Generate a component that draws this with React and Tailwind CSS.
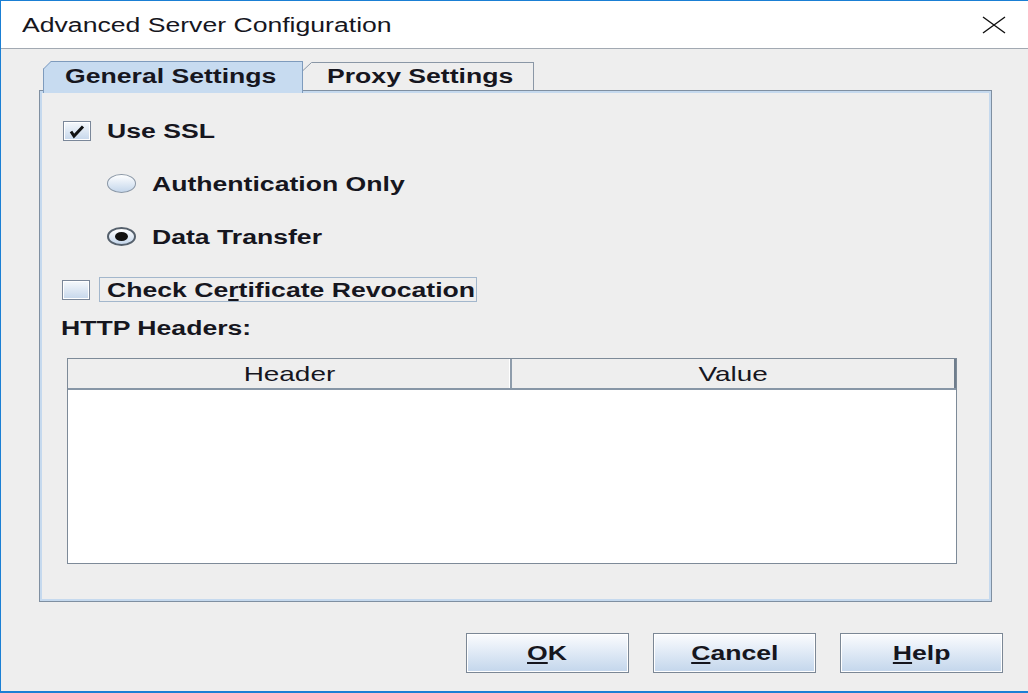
import React from 'react';

// horizontally stretched text, the screenshot is wider than it is tall
const S = ({ children, center, className = '' }) => (
  <span
    className={`inline-block whitespace-nowrap scale-x-[1.33] ${
      center ? 'origin-center' : 'origin-left'
    } ${className}`}
  >
    {children}
  </span>
);

const CheckBox = ({ checked }) => (
  <div className="w-[28px] h-[20px] shrink-0 border border-[#7a8799] bg-linear-to-b from-[#f6f9fc] to-[#c6d7eb] shadow-[inset_0_0_0_1px_#ffffff] flex items-center justify-center">
    {checked && (
      <svg width="20" height="16" viewBox="0 0 20 16">
        <path d="M4 8.5 L7 13 L16 3.5" stroke="#111" strokeWidth="3" fill="none" />
      </svg>
    )}
  </div>
);

const Radio = ({ checked }) => (
  <div
    className={`w-[29px] h-[19px] shrink-0 rounded-[50%] border bg-linear-to-b from-[#ffffff] to-[#c4d6eb] flex items-center justify-center ${
      checked ? 'border-[#55606c] border-2' : 'border-[#8a97a6]'
    }`}
  >
    {checked && <div className="w-[13px] h-[9px] rounded-[50%] bg-[#111]" />}
  </div>
);

const Button = ({ mnemonic, rest }) => (
  <button className="w-[163px] h-[40px] border border-[#7b8795] bg-linear-to-b from-[#fbfcfe] to-[#c3d6ec] shadow-[inset_0_0_0_1px_#ffffff] font-bold text-[20px] flex items-center justify-center">
    <S center>
      <u className="underline-offset-2">{mnemonic}</u>
      {rest}
    </S>
  </button>
);

export default function App() {
  return (
    <div className="w-[1028px] h-[693px] flex flex-col border-t border-l border-b-2 border-[#1a7fd4] bg-[#eeeeee] text-[#16161e] font-['Liberation_Sans',Arial,sans-serif]">
      {/* Title bar */}
      <div className="h-[48px] shrink-0 bg-white border-b border-[#a2a9b2] flex items-center justify-between pl-[21px] pr-[22px]">
        <span className="text-[20px] leading-none">
          <S>Advanced Server Configuration</S>
        </span>
        <svg width="24" height="18" viewBox="0 0 24 18">
          <path d="M1 1 L23 17 M23 1 L1 17" stroke="#111" strokeWidth="1.4" fill="none" />
        </svg>
      </div>

      {/* Body */}
      <div className="flex-1 flex flex-col pl-[38px] pt-[12px]">
        {/* Tabs */}
        <div className="flex items-end h-[29px] ml-[4px] text-[20px] font-bold">
          <div className="relative z-10 w-[260px] h-[32px] -mb-[3px] border border-b-0 border-[#7e9bbd] bg-[#c7dbf0] pl-[21px] pb-[4px] flex items-center">
            <svg className="absolute -left-px -top-px" width="8" height="8" viewBox="0 0 8 8">
              <path d="M0 0 H8 L0 8 Z" fill="#eeeeee" />
              <path d="M0.5 8 L8 0.5" stroke="#7e9bbd" fill="none" />
            </svg>
            <S>General Settings</S>
          </div>
          <div className="relative w-[231px] h-[28px] border border-l-0 border-b-0 border-[#8a97a6] bg-[#eeeeee] pl-[24px] pb-[1px] flex items-center">
            <svg className="absolute left-0 -top-px" width="9" height="9" viewBox="0 0 9 9">
              <path d="M0 0 H9 L0 9 Z" fill="#eeeeee" />
              <path d="M0 8.5 L8.5 0.5" stroke="#8a97a6" fill="none" />
            </svg>
            <S>Proxy Settings</S>
          </div>
        </div>

        {/* Tab panel */}
        <div className="w-[953px] h-[512px] border border-[#7f8fa1]">
          <div className="h-full border-2 border-[#c5d9ee] flex flex-col pt-[11px] text-[20px] font-bold">
            <div className="h-[53px] flex items-center pl-[21px] gap-[16px]">
              <CheckBox checked />
              <S>Use SSL</S>
            </div>
            <div className="h-[53px] flex items-center pl-[65px] gap-[16px]">
              <Radio />
              <S>Authentication Only</S>
            </div>
            <div className="h-[53px] flex items-center pl-[65px] gap-[16px]">
              <Radio checked />
              <S>Data Transfer</S>
            </div>
            <div className="h-[53px] flex items-center pl-[20px] gap-[9px]">
              <CheckBox />
              <div className="w-[378px] h-[25px] border border-[#a3b7cc] pl-[7px] flex items-center">
                <S>
                  Check Ce<u className="underline-offset-2">r</u>tificate Revocation
                </S>
              </div>
            </div>
            <div className="h-[24px] flex items-center pl-[19px]">
              <S>HTTP Headers:</S>
            </div>

            {/* Table */}
            <div className="mt-[18px] ml-[25px] w-[890px] h-[206px] border border-[#7d8a98] bg-white flex flex-col font-normal text-[21px]">
              <div className="h-[31px] shrink-0 flex bg-[#eeeeee] border-b-2 border-[#8796a6]">
                <div className="w-[444px] border-r-2 border-[#8e9cab] shadow-[inset_-1px_0_0_#ffffff] flex items-center justify-center">
                  <S center>Header</S>
                </div>
                <div className="flex-1 border-r-2 border-[#6f7d8c] flex items-center justify-center">
                  <S center>Value</S>
                </div>
              </div>
              <div className="flex-1 bg-white" />
            </div>
          </div>
        </div>

        {/* Buttons */}
        <div className="mt-[31px] flex justify-end gap-[24px] pr-[25px]">
          <Button mnemonic="O" rest="K" />
          <Button mnemonic="C" rest="ancel" />
          <Button mnemonic="H" rest="elp" />
        </div>
      </div>
    </div>
  );
}
